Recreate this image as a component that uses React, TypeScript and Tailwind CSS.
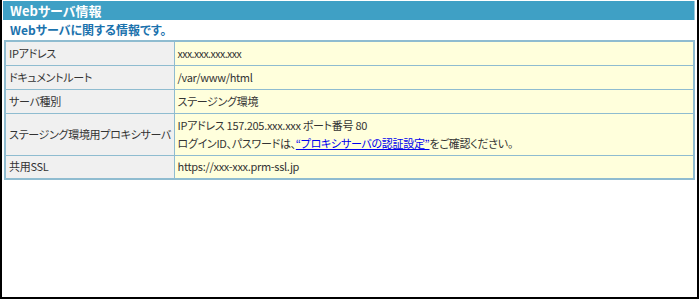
const rows: { label: string; value: React.ReactNode; tall?: boolean }[] = [
  { label: 'IPアドレス', value: <span className="text-[10.5px] tracking-[-0.5px]">xxx.xxx.xxx.xxx</span> },
  { label: 'ドキュメントルート', value: '/var/www/html' },
  { label: 'サーバ種別', value: 'ステージング環境' },
  {
    label: 'ステージング環境用プロキシサーバ',
    tall: true,
    value: (
      <div className="flex flex-col gap-[7px]">
        <div>IPアドレス 157.205.xxx.xxx ポート番号 80</div>
        <div>
          ログインID、パスワードは、
          <a href="#" className="text-[#0000ee] underline">
            “プロキシサーバの認証設定”
          </a>
          をご確認ください。
        </div>
      </div>
    ),
  },
  { label: '共用SSL', value: 'https://xxx-xxx.prm-ssl.jp' },
];

export default function App() {
  return (
    <div
      className="w-[699px] h-[299px] bg-white border-l-2 border-r-2 border-b-2 border-black text-[#333]"
      style={{ fontFamily: '"Noto Sans CJK JP", sans-serif', fontFeatureSettings: '"palt"' }}
    >
      <div className="pt-px pl-px pr-[2px]">
        <div className="h-[19px] bg-[#3fa0c5] border-r border-[#9cc9dc] flex items-center pl-[7px] text-white font-bold text-[13px] leading-none">
          Webサーバ情報
        </div>
        <div className="h-[20px] flex items-center pl-[7px] text-[#1b72ad] font-bold text-[12px] leading-none">
          Webサーバに関する情報です。
        </div>
        <div className="pl-px">
          <table className="w-full table-fixed border-collapse border-2 border-[#8fbcd0] leading-none text-[11px] tracking-[-0.3px]">
            <colgroup>
              <col className="w-[169px]" />
              <col />
            </colgroup>
            <tbody>
              {rows.map((r) => (
                <tr key={r.label} className={r.tall ? 'h-[42px]' : 'h-[24px]'}>
                  <td className="bg-[#f0f0f0] border border-[#8fbcd0] pl-[3px] whitespace-nowrap overflow-hidden">
                    {r.label}
                  </td>
                  <td className="bg-[#ffffdc] border border-[#8fbcd0] pl-[3px] whitespace-nowrap">{r.value}</td>
                </tr>
              ))}
            </tbody>
          </table>
        </div>
      </div>
    </div>
  );
}
